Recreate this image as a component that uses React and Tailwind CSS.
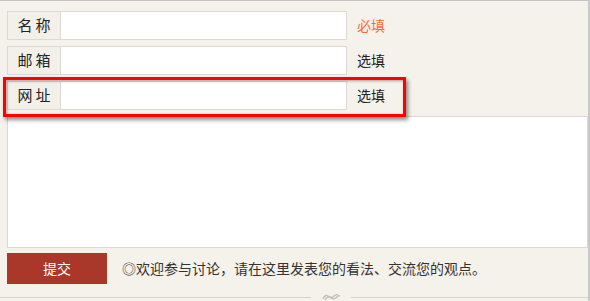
const font = { fontFamily: '"Noto Sans CJK SC", "Noto Sans", sans-serif' }

function Row({ label, hint, required }) {
  return (
    <div className="flex items-center h-[29px]">
      <div className="w-[54px] h-full border border-[#dcd9d3] bg-[#f3f0ea] flex items-center justify-center text-[15px] text-[#222] tracking-[3px] pl-[3px]">
        {label}
      </div>
      <div className="w-[286px] h-full border border-l-0 border-[#dcd9d3] bg-white"></div>
      <span className={"ml-[10px] text-[14px] " + (required ? "text-[#ff6a33]" : "text-[#222]")}>{hint}</span>
    </div>
  )
}

export default function App() {
  return (
    <div
      className="relative w-[590px] h-[301px] overflow-hidden bg-[#f5f2eb] border-t border-[#c4c4c4] border-r-2 border-r-[#c9c9c9]"
      style={font}
    >
      <div className="pl-[7px] pt-[10px] flex flex-col">
        <div className="flex flex-col gap-[6px]">
          <Row label="名称" hint="必填" required />
          <Row label="邮箱" hint="选填" />
          <Row label="网址" hint="选填" />
        </div>
        <div className="mt-[6px] w-[581px] h-[132px] border border-[#dcd9d3] bg-white"></div>
        <div className="mt-[5px] flex items-center">
          <button className="w-[100px] h-[31px] bg-[#a9372a] text-white text-[14px]">提交</button>
          <span className="ml-[15px] text-[14px] text-[#333]">◎欢迎参与讨论，请在这里发表您的看法、交流您的观点。</span>
        </div>
        <div className="mt-[8px] -ml-[7px] h-[10px] flex items-center">
          <div className="w-[311px] h-px bg-[#d6d3cd]"></div>
          <svg width="40" height="10" viewBox="0 0 40 10" className="shrink-0">
            <path d="M12 7 Q14 2 17 4 Q20 7 23 4 Q25 2 27 3" stroke="#c4c1bb" strokeWidth="1.5" fill="none" />
            <path d="M14 8 Q17 3 20 6 Q23 8 26 5 Q28 3 29 4" stroke="#c4c1bb" strokeWidth="1.5" fill="none" />
          </svg>
          <div className="flex-1 h-px bg-[#d6d3cd]"></div>
        </div>
      </div>
      <div className="absolute left-[3px] top-[76px] w-[403px] h-[40px] border-[3px] border-[#ff0000] shadow-[2px_3px_4px_rgba(0,0,0,0.45),inset_1px_1px_3px_rgba(0,0,0,0.35)]"></div>
    </div>
  )
}
